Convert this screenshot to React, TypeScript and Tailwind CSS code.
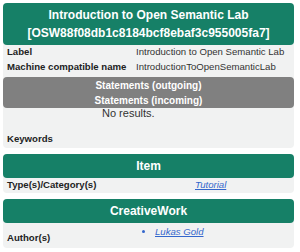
export default function App() {
  return (
    <div className="w-[300px] h-[252px] bg-white px-[3px] pt-[3px] font-['Liberation_Sans',Arial,sans-serif] text-[9.6px] text-[#222] overflow-hidden">
      {/* main card */}
      <div className="rounded-[4px] bg-[#f1f2f2] w-[291px]">
        <div className="bg-[#168067] rounded-[4px] text-white font-bold text-[12px] leading-[18px] text-center pt-[3px] pb-[3px]">
          <div>Introduction to Open Semantic Lab</div>
          <div>[OSW88f08db1c8184bcf8ebaf3c955005fa7]</div>
        </div>
        <div className="flex h-[15px] items-center whitespace-nowrap">
          <div className="w-[133px] pl-[4px] font-bold">Label</div>
          <div className="text-[#333]">Introduction to Open Semantic Lab</div>
        </div>
        <div className="flex h-[15px] items-center whitespace-nowrap">
          <div className="w-[133px] pl-[4px] font-bold">Machine compatible name</div>
          <div className="text-[#333]">IntroductionToOpenSemanticLab</div>
        </div>
        <div className="mt-[2px] bg-[#808080] rounded-[4px] text-white font-bold text-[10px] text-center h-[31px] flex flex-col justify-center leading-[15px]">
          <div>Statements (outgoing)</div>
          <div>Statements (incoming)</div>
        </div>
        <div className="h-[11px] flex items-center pl-[99px] text-[11px] text-[#333]">No results.</div>
        <div className="h-[29px] flex items-end pb-[2px] pl-[4px] font-bold">Keywords</div>
      </div>

      {/* Item card */}
      <div className="mt-[6px] rounded-[4px] bg-[#f1f2f2] w-[291px]">
        <div className="bg-[#168067] rounded-[4px] text-white font-bold text-[12px] h-[24px] flex items-center justify-center">
          Item
        </div>
        <div className="flex h-[15px] items-center">
          <div className="w-[192px] pl-[4px] font-bold">Type(s)/Category(s)</div>
          <a className="italic underline text-[#3366cc]">Tutorial</a>
        </div>
      </div>

      {/* CreativeWork card */}
      <div className="mt-[6px] rounded-[4px] bg-[#f1f2f2] w-[291px] h-[49px]">
        <div className="bg-[#168067] rounded-[4px] text-white font-bold text-[12px] h-[24px] flex items-center justify-center">
          CreativeWork
        </div>
        <div className="flex">
          <div className="w-[133px] pl-[4px] pt-[8px] font-bold">Author(s)</div>
          <ul className="list-disc pl-[19px] pt-[2px] text-[#3366cc]">
            <li>
              <a className="italic underline">Lukas Gold</a>
            </li>
          </ul>
        </div>
      </div>
    </div>
  );
}
